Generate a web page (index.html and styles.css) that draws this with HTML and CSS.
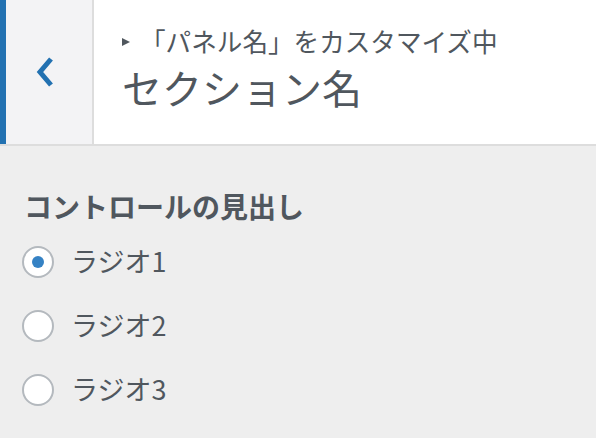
FILE: index.html
```html
<!DOCTYPE html>
<html lang="ja">
<head>
<meta charset="utf-8">
<link rel="stylesheet" href="styles.css">
</head>
<body>
<div class="header">
  <div class="back">
    <svg width="18" height="32" viewBox="0 0 18 32"><path d="M15 3 L4 16 L15 29" fill="none" stroke="#2271b1" stroke-width="5"/></svg>
  </div>
  <div class="titles">
    <div class="caption"><span class="tri"></span>「パネル名」をカスタマイズ中</div>
    <div class="title">セクション名</div>
  </div>
</div>
<div class="content">
  <div class="ctl-title">コントロールの見出し</div>
  <div class="radio-row"><span class="radio checked"></span><span class="label">ラジオ1</span></div>
  <div class="radio-row"><span class="radio"></span><span class="label">ラジオ2</span></div>
  <div class="radio-row"><span class="radio"></span><span class="label">ラジオ3</span></div>
</div>
</body>
</html>
```
FILE: styles.css
```css
html, body {
  margin: 0;
  padding: 0;
  background: #eeeeee;
  font-family: "Noto Sans CJK JP", "Noto Sans", sans-serif;
  color: #50575e;
}
.header {
  display: flex;
  height: 144px;
  background: #fff;
  border-bottom: 2px solid #dddddd;
}
.back {
  width: 94px;
  box-sizing: border-box;
  border-left: 6px solid #2271b1;
  border-right: 2px solid #dddddd;
  background: #f3f3f5;
  display: flex;
  align-items: center;
  justify-content: center;
  padding-right: 8px;
}
.titles {
  display: flex;
  flex-direction: column;
  justify-content: center;
  padding-left: 28px;
  padding-bottom: 6px;
}
.caption {
  font-size: 25.6px;
  line-height: 36px;
  display: flex;
  align-items: center;
}
.tri {
  width: 0;
  height: 0;
  border-top: 4px solid transparent;
  border-bottom: 4px solid transparent;
  border-left: 8px solid #50575e;
  margin-right: 10px;
  margin-top: 2px;
}
.title {
  font-size: 40px;
  line-height: 56px;
}
.content {
  padding: 40px 24px 0 22px;
}
.ctl-title {
  font-size: 28px;
  font-weight: bold;
  line-height: 40px;
  padding-left: 2px;
  margin-bottom: 4px;
}
.radio-row {
  display: flex;
  align-items: center;
  height: 64px;
}
.radio {
  width: 32px;
  height: 32px;
  box-sizing: border-box;
  border: 2px solid #b4b9be;
  border-radius: 50%;
  background: #fff;
  display: flex;
  align-items: center;
  justify-content: center;
  margin-right: 17px;
}
.radio.checked::before {
  content: "";
  width: 12px;
  height: 12px;
  border-radius: 50%;
  background: #3582c4;
}
.label {
  font-size: 27px;
  line-height: 40px;
  padding-bottom: 2px;
}
```
